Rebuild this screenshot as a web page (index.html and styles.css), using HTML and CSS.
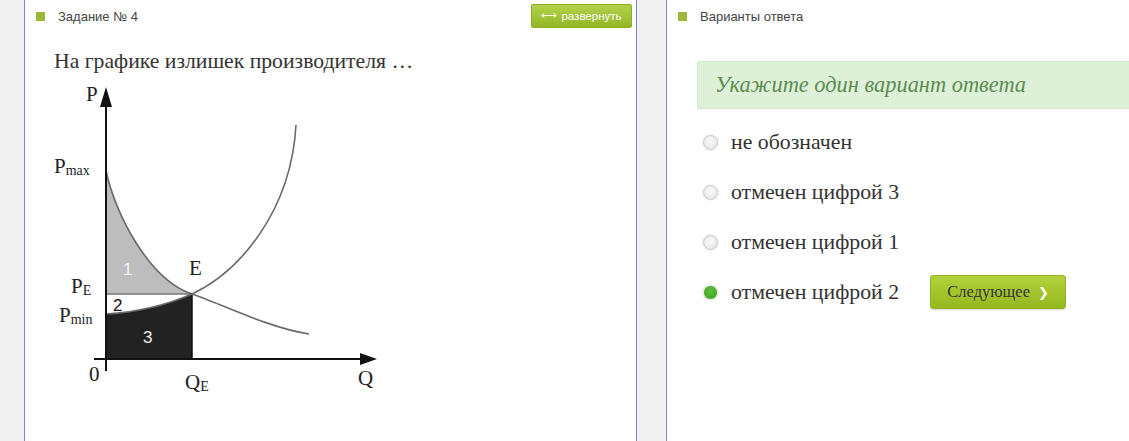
FILE: index.html
```html
<!DOCTYPE html>
<html lang="ru">
<head>
<meta charset="utf-8">
<link rel="stylesheet" href="styles.css">
</head>
<body>
<div class="page">
  <div class="side-gap"></div>
  <section class="panel panel-task">
    <header class="panel-head">
      <span class="marker"></span>
      <span class="head-title">Задание № 4</span>
      <button class="expand-btn"><span class="arrows">&#x27F7;</span>развернуть</button>
    </header>
    <p class="question">На графике излишек производителя …</p>
    <svg class="graph" width="340" height="320" viewBox="0 0 340 320" xmlns="http://www.w3.org/2000/svg">
      <path d="M57,88 C65,130 100,198 143,212 L57,212 Z" fill="#bdbdbd"/>
      <path d="M57,232 C90,230 120,222 143,212 L143,277 L57,277 Z" fill="#222"/>
      <line x1="57" y1="212" x2="143" y2="212" stroke="#777" stroke-width="1.5"/>
      <line x1="143" y1="212" x2="143" y2="277" stroke="#111" stroke-width="1.5"/>
      <path d="M57,88 C65,130 100,198 143,212 C170,221 220,246 260,252" fill="none" stroke="#6a6a6a" stroke-width="1.6"/>
      <path d="M57,232 C90,230 120,222 143,212 C190,190 242,130 247,43" fill="none" stroke="#6a6a6a" stroke-width="1.6"/>
      <line x1="57" y1="22" x2="57" y2="289" stroke="#111" stroke-width="2"/>
      <polygon points="57,5 51,25 63,25" fill="#111"/>
      <line x1="45" y1="277" x2="314" y2="277" stroke="#111" stroke-width="2"/>
      <polygon points="328,277 311,271 311,283" fill="#111"/>
      <g class="lbl">
        <text x="37" y="19">P</text>
        <text x="5" y="91">P<tspan class="sub" dy="2">max</tspan></text>
        <text x="22" y="211">P<tspan class="sub" dy="2">E</tspan></text>
        <text x="10" y="240">P<tspan class="sub" dy="2">min</tspan></text>
        <text x="40" y="299">0</text>
        <text x="136" y="307">Q<tspan class="sub" dy="2">E</tspan></text>
        <text x="309" y="303">Q</text>
        <text x="140" y="193">E</text>
      </g>
      <g class="num">
        <text x="74" y="193" fill="#f4f4f4">1</text>
        <text x="64" y="229" fill="#111">2</text>
        <text x="94" y="261" fill="#eee">3</text>
      </g>
    </svg>
  </section>
  <div class="mid-gap"></div>
  <section class="panel panel-answers">
    <header class="panel-head">
      <span class="marker"></span>
      <span class="head-title">Варианты ответа</span>
    </header>
    <div class="hint">Укажите один вариант ответа</div>
    <ul class="options">
      <li class="option"><span class="radio"></span>не обозначен</li>
      <li class="option"><span class="radio"></span>отмечен цифрой 3</li>
      <li class="option"><span class="radio"></span>отмечен цифрой 1</li>
      <li class="option"><span class="radio checked"></span>отмечен цифрой 2
        <button class="next-btn">Следующее<span class="chev">&#x276F;</span></button>
      </li>
    </ul>
  </section>
</div>
</body>
</html>
```

FILE: styles.css
```css
* { box-sizing: border-box; }
html, body { margin: 0; padding: 0; }
body {
  background: #f0f0f0;
  font-family: "Liberation Sans", Arial, sans-serif;
  width: 1129px;
  height: 441px;
  overflow: hidden;
}
.page {
  display: flex;
  height: 441px;
}
.side-gap { width: 24px; flex: none; }
.mid-gap { width: 29px; flex: none; }
.panel {
  background: #fff;
  border-left: 1px solid #8088bd;
  height: 441px;
  flex: none;
}
.panel-task {
  width: 613px;
  border-right: 1px solid #8088bd;
}
.panel-answers {
  flex: 1;
  min-width: 480px;
}
.panel-head {
  display: flex;
  align-items: center;
  height: 32px;
  padding: 0 4px 0 11px;
}
.marker {
  width: 9px;
  height: 9px;
  background: #9bb83a;
  margin-right: 13px;
  flex: none;
}
.head-title {
  font-size: 13px;
  color: #444;
  flex: 1;
}
.expand-btn {
  height: 24px;
  width: 101px;
  border: 1px solid #8fae24;
  border-radius: 2px;
  background: linear-gradient(#b4d24c, #93b624);
  color: #fff;
  font-family: "Liberation Sans", Arial, sans-serif;
  font-size: 11.5px;
  padding: 0;
  display: flex;
  align-items: center;
  justify-content: center;
  gap: 4px;
  margin-top: -1px;
}
.arrows { font-size: 11px; color: #f4f8e6; }
.question {
  margin: 17px 0 0 29px;
  font-family: "Liberation Serif", "Times New Roman", serif;
  font-size: 21.7px;
  color: #333;
  line-height: 24px;
}
.graph {
  display: block;
  margin: 9px 0 0 24px;
}
.lbl text {
  font-family: "Liberation Serif", "Times New Roman", serif;
  font-size: 21px;
  fill: #222;
}
.lbl .sub { font-size: 14px; }
.num text {
  font-family: "Liberation Sans", Arial, sans-serif;
  font-size: 17px;
}
.hint {
  margin: 29px 0 0 30px;
  height: 48px;
  background: #dff0d8;
  border: 1px solid #d2e6c8;
  border-right: none;
  border-radius: 3px 0 0 3px;
  padding-left: 17px;
  display: flex;
  align-items: center;
  font-family: "Liberation Serif", "Times New Roman", serif;
  font-style: italic;
  font-size: 22.4px;
  color: #5b8c52;
}
.options {
  list-style: none;
  margin: 8px 0 0 36px;
  padding: 0;
}
.option {
  display: flex;
  align-items: center;
  height: 50px;
  font-family: "Liberation Serif", "Times New Roman", serif;
  font-size: 21.8px;
  color: #333;
}
.radio {
  width: 15px;
  height: 15px;
  border-radius: 50%;
  border: 1px solid #c8c8c8;
  background: radial-gradient(circle at 50% 40%, #fafafa, #e2e2e2);
  box-shadow: 0 0 2px rgba(0,0,0,0.15);
  margin-right: 13px;
  flex: none;
}
.radio.checked {
  background: radial-gradient(circle at 50% 40%, #5cc23a, #3e9a22);
  border: 1px solid #e3f0dc;
  box-shadow: 0 0 2px rgba(0,0,0,0.25);
}
.next-btn {
  margin-left: 31px;
  width: 136px;
  height: 34px;
  border: 1px solid #93b22a;
  border-radius: 3px;
  background: linear-gradient(#b3d13c, #95b81f);
  font-family: "Liberation Serif", "Times New Roman", serif;
  font-size: 16.5px;
  color: #333;
  display: flex;
  align-items: center;
  justify-content: center;
  gap: 8px;
  padding: 0;
  box-shadow: 0 1px 1px rgba(0,0,0,0.15);
}
.chev {
  color: #fff;
  font-family: "DejaVu Sans", sans-serif;
  font-size: 13px;
  font-weight: bold;
}
```
